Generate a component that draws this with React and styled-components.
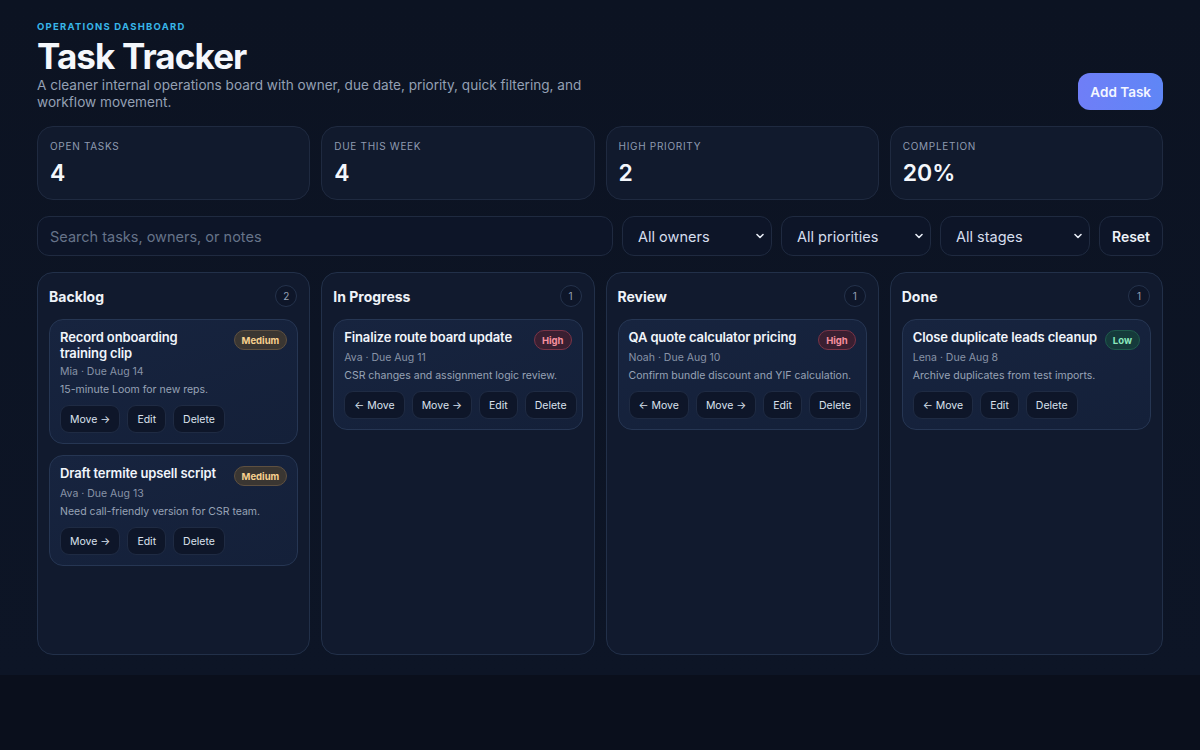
import { createGlobalStyle } from "styled-components";
import styled from "styled-components";

const GlobalStyle = createGlobalStyle`
  * { box-sizing: border-box; }
  body {
    margin: 0;
    background: #0a0f1c;
    font-family: Inter, "Noto Sans", sans-serif;
    color: #e6ecf5;
  }
`;

const Page = styled.div`
  background: linear-gradient(180deg, #0c1322 0%, #0d1526 100%);
  padding: 20px 37px 20px;
`;

const Header = styled.header`
  display: flex;
  justify-content: space-between;
  align-items: flex-end;
`;

const Eyebrow = styled.div`
  font-size: 9.5px;
  line-height: 14px;
  font-weight: 700;
  letter-spacing: 0.13em;
  color: #38b6e8;
  text-transform: uppercase;
`;

const Title = styled.h1`
  margin: 1px 0 0;
  font-size: 35px;
  line-height: 42px;
  font-weight: 700;
  letter-spacing: -0.025em;
  color: #f4f7fc;
`;

const Subtitle = styled.p`
  margin: 0;
  max-width: 560px;
  font-size: 13.6px;
  line-height: 17px;
  color: #94a0b4;
`;

const PrimaryButton = styled.button`
  height: 37px;
  padding: 0 12px;
  border: none;
  border-radius: 12px;
  background: linear-gradient(90deg, #6f7ef7, #5f86f6);
  color: #f3f6ff;
  font: 600 13.5px Inter, sans-serif;
  margin-bottom: 1px;
`;

const StatsRow = styled.section`
  display: grid;
  grid-template-columns: repeat(4, minmax(0, 1fr));
  gap: 11px;
  margin-top: 15px;
`;

const StatCard = styled.div`
  height: 74px;
  padding: 13px 12px;
  border-radius: 16px;
  background: #111a2d;
  border: 1px solid #1f2a40;
`;

const StatLabel = styled.div`
  font-size: 10px;
  line-height: 13px;
  letter-spacing: 0.07em;
  text-transform: uppercase;
  color: #8f9bb0;
`;

const StatValue = styled.div`
  margin-top: 5px;
  font-size: 23px;
  line-height: 30px;
  font-weight: 600;
  color: #f4f7fc;
`;

const Filters = styled.section`
  display: flex;
  gap: 9px;
  margin-top: 16px;
  height: 40px;
`;

const Search = styled.input`
  flex: 1;
  height: 40px;
  padding: 0 12px;
  border-radius: 12px;
  border: 1px solid #1f2a40;
  background: #0d1528;
  color: #e6ecf5;
  font: 14.5px Inter, sans-serif;
  outline: none;
  &::placeholder { color: #667389; }
`;

const SelectWrap = styled.div`
  position: relative;
  width: 150px;
  height: 40px;
`;

const Select = styled.select`
  appearance: none;
  width: 100%;
  height: 100%;
  padding: 0 15px;
  border-radius: 12px;
  border: 1px solid #1f2a40;
  background: #0d1528;
  color: #d5dded;
  font: 14.5px Inter, sans-serif;
  outline: none;
`;

const Chevron = styled.svg`
  position: absolute;
  right: 8px;
  top: 17px;
  pointer-events: none;
`;

const GhostButton = styled.button`
  width: 64px;
  height: 40px;
  border-radius: 12px;
  border: 1px solid #1f2a40;
  background: #0d1528;
  color: #eef2f8;
  font: 600 14px Inter, sans-serif;
`;

const Board = styled.section`
  display: grid;
  grid-template-columns: repeat(4, minmax(0, 1fr));
  gap: 11px;
  margin-top: 16px;
`;

const Column = styled.div`
  min-height: 383px;
  padding: 12px 11px;
  border-radius: 16px;
  background: #111a2e;
  border: 1px solid #223049;
  display: flex;
  flex-direction: column;
  gap: 11px;
`;

const ColumnHead = styled.div`
  display: flex;
  justify-content: space-between;
  align-items: center;
  height: 22px;
  padding-right: 1px;
  margin-bottom: 1px;
`;

const ColumnTitle = styled.h2`
  margin: 0;
  font-size: 14px;
  font-weight: 700;
  color: #eef2f8;
`;

const Count = styled.span`
  width: 22px;
  height: 22px;
  border-radius: 50%;
  border: 1px solid #24324b;
  background: #0e1629;
  display: grid;
  place-items: center;
  font-size: 10px;
  color: #95a1b5;
`;

const Card = styled.article`
  padding: 9px 10px 10px;
  border-radius: 14px;
  background: linear-gradient(160deg, #17243f 0%, #142039 100%);
  border: 1px solid #263653;
`;

const CardTop = styled.div`
  display: flex;
  justify-content: space-between;
  align-items: flex-start;
  gap: 6px;
`;

const CardTitle = styled.h3`
  margin: 0;
  font-size: 13px;
  line-height: 16px;
  font-weight: 600;
  letter-spacing: -0.01em;
  text-wrap: balance;
  color: #f1f5fb;
`;

const tones = {
  Medium: { bg: "#3a3632", border: "#5e5040", fg: "#f7d08e" },
  High: { bg: "#3a1f31", border: "#7a3447", fg: "#f58f9e" },
  Low: { bg: "#153a3b", border: "#1f5a4c", fg: "#8ae8bd" },
};

const Badge = styled.span`
  flex-shrink: 0;
  height: 20px;
  margin: 1px 0 -3px;
  padding: 0 7px;
  border-radius: 10px;
  display: inline-flex;
  align-items: center;
  font-size: 9.5px;
  font-weight: 700;
  background: ${(p) => tones[p.$level].bg};
  border: 1px solid ${(p) => tones[p.$level].border};
  color: ${(p) => tones[p.$level].fg};
`;

const Meta = styled.div`
  margin-top: 4px;
  font-size: 10.5px;
  line-height: 14px;
  color: #8893a7;
`;

const Note = styled.div`
  margin-top: 4px;
  font-size: 10.5px;
  line-height: 14px;
  color: #98a3b6;
`;

const Actions = styled.div`
  display: flex;
  gap: 7px;
  margin-top: 8px;
`;

const SmallButton = styled.button`
  height: 28px;
  padding: 0 9px;
  border-radius: 9px;
  border: 1px solid #1f2b43;
  background: #0e1629;
  color: #dbe2ee;
  font: 10.5px Inter, sans-serif;
  white-space: nowrap;
`;

const columns = [
  {
    name: "Backlog",
    tasks: [
      { title: "Record onboarding training clip", level: "Medium", owner: "Mia", due: "Aug 14", note: "15-minute Loom for new reps.", back: false, fwd: true },
      { title: "Draft termite upsell script", level: "Medium", owner: "Ava", due: "Aug 13", note: "Need call-friendly version for CSR team.", back: false, fwd: true },
    ],
  },
  {
    name: "In Progress",
    tasks: [
      { title: "Finalize route board update", level: "High", owner: "Ava", due: "Aug 11", note: "CSR changes and assignment logic review.", back: true, fwd: true },
    ],
  },
  {
    name: "Review",
    tasks: [
      { title: "QA quote calculator pricing", level: "High", owner: "Noah", due: "Aug 10", note: "Confirm bundle discount and YIF calculation.", back: true, fwd: true },
    ],
  },
  {
    name: "Done",
    tasks: [
      { title: "Close duplicate leads cleanup", level: "Low", owner: "Lena", due: "Aug 8", note: "Archive duplicates from test imports.", back: true, fwd: false },
    ],
  },
];

const stats = [
  { label: "Open tasks", value: "4" },
  { label: "Due this week", value: "4" },
  { label: "High priority", value: "2" },
  { label: "Completion", value: "20%" },
];

const FilterSelect = ({ label }) => (
  <SelectWrap>
    <Select defaultValue={label}>
      <option>{label}</option>
    </Select>
    <Chevron width="8" height="6" viewBox="0 0 8 6">
      <path d="M1 1.5 L4 4.5 L7 1.5" fill="none" stroke="#e6ecf5" strokeWidth="1.6" strokeLinecap="round" strokeLinejoin="round" />
    </Chevron>
  </SelectWrap>
);

export default function App() {
  return (
    <>
      <GlobalStyle />
      <Page>
        <Header>
          <div>
            <Eyebrow>Operations Dashboard</Eyebrow>
            <Title>Task Tracker</Title>
            <Subtitle>
              A cleaner internal operations board with owner, due date, priority, quick filtering, and workflow movement.
            </Subtitle>
          </div>
          <PrimaryButton>Add Task</PrimaryButton>
        </Header>

        <StatsRow>
          {stats.map((s) => (
            <StatCard key={s.label}>
              <StatLabel>{s.label}</StatLabel>
              <StatValue>{s.value}</StatValue>
            </StatCard>
          ))}
        </StatsRow>

        <Filters>
          <Search placeholder="Search tasks, owners, or notes" />
          <FilterSelect label="All owners" />
          <FilterSelect label="All priorities" />
          <FilterSelect label="All stages" />
          <GhostButton>Reset</GhostButton>
        </Filters>

        <Board>
          {columns.map((col) => (
            <Column key={col.name}>
              <ColumnHead>
                <ColumnTitle>{col.name}</ColumnTitle>
                <Count>{col.tasks.length}</Count>
              </ColumnHead>
              {col.tasks.map((t) => (
                <Card key={t.title}>
                  <CardTop>
                    <CardTitle>{t.title}</CardTitle>
                    <Badge $level={t.level}>{t.level}</Badge>
                  </CardTop>
                  <Meta>{t.owner} · Due {t.due}</Meta>
                  <Note>{t.note}</Note>
                  <Actions>
                    {t.back && <SmallButton>← Move</SmallButton>}
                    {t.fwd && <SmallButton>Move →</SmallButton>}
                    <SmallButton>Edit</SmallButton>
                    <SmallButton>Delete</SmallButton>
                  </Actions>
                </Card>
              ))}
            </Column>
          ))}
        </Board>
      </Page>
    </>
  );
}
